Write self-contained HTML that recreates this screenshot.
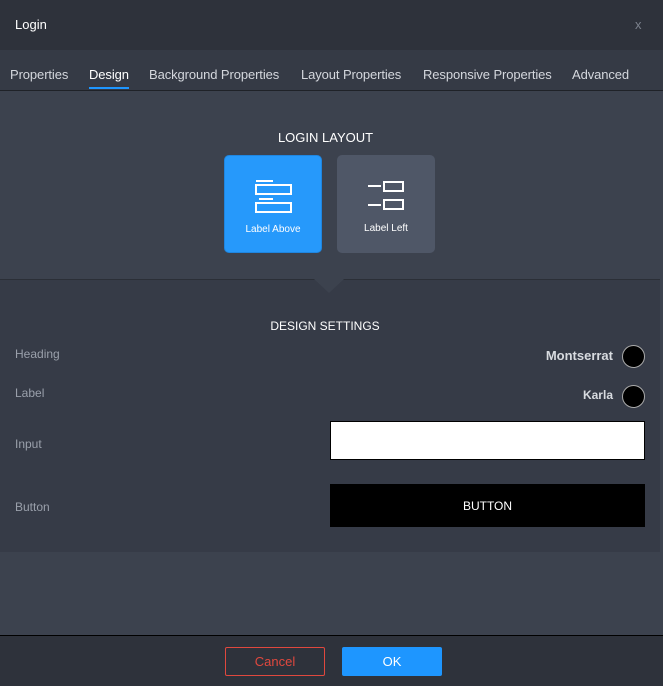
<!DOCTYPE html>
<html><head><style>
*{margin:0;padding:0;box-sizing:border-box}
body{width:663px;height:686px;background:#3c424e;font-family:"Liberation Sans",sans-serif;position:relative;overflow:hidden;color:#fff}
.abs{position:absolute}
.hdr{left:0;top:0;width:663px;height:50px;background:#2e323b}
.tabs{left:0;top:50px;width:663px;height:41px;background:#353a45;border-bottom:1px solid #1f2228}
.tab{position:absolute;top:17px;font-size:13px;color:#d4d7dd;letter-spacing:-0.1px}
.card{position:absolute;top:155px;width:98px;height:98px;border-radius:5px;font-size:10px;text-align:center}
.card span{position:absolute;left:0;right:0;top:68px}
.lbl{position:absolute;left:15px;font-size:12px;color:#9aa0ab}
</style></head><body>
<div class="abs hdr"></div>
<div class="abs" style="left:15px;top:17px;font-size:13px">Login</div>
<div class="abs" style="left:635px;top:17px;font-size:13px;color:#7b818c">x</div>
<div class="abs tabs">
<div class="tab" style="left:10px">Properties</div>
<div class="tab" style="left:89px;color:#fff">Design</div>
<div class="abs" style="left:89px;top:37px;width:40px;height:2px;background:#1e96ff"></div>
<div class="tab" style="left:149px">Background Properties</div>
<div class="tab" style="left:301px">Layout Properties</div>
<div class="tab" style="left:423px">Responsive Properties</div>
<div class="tab" style="left:572px">Advanced</div>
</div>
<div class="abs" style="left:0;top:130px;width:651px;text-align:center;font-size:13px">LOGIN LAYOUT</div>
<div class="card" style="left:224px;background:#2699fb;border:1px solid #1f86e0">
<svg class="abs" style="left:0;top:0" width="98" height="98"><g fill="none" stroke="#fff" stroke-width="2"><path d="M31 25h17M34 43h14"/><rect x="31" y="29" width="35" height="9"/><rect x="31" y="47" width="35" height="9"/></g></svg>
<span>Label Above</span></div>
<div class="card" style="left:337px;background:#4f5767">
<svg class="abs" style="left:0;top:0" width="98" height="98"><g fill="none" stroke="#fff" stroke-width="2"><path d="M31 31h13M31 50h13"/><rect x="47" y="27" width="19" height="9"/><rect x="47" y="45" width="19" height="9"/></g></svg>
<span>Label Left</span></div>
<div class="abs" style="left:0;top:279px;width:660px;height:273px;background:#363b47;border-top:1px solid #2b2f37"></div>
<svg class="abs" style="left:314px;top:279px" width="32" height="16"><path d="M0 0L15 14L30 0Z" fill="#3c424e"/></svg>
<div class="abs" style="left:0;top:319px;width:650px;text-align:center;font-size:12px">DESIGN SETTINGS</div>
<div class="lbl" style="top:347px">Heading</div>
<div class="lbl" style="top:386px">Label</div>
<div class="lbl" style="top:437px">Input</div>
<div class="lbl" style="top:500px">Button</div>
<div class="abs" style="right:50px;top:348px;font-size:13px;font-weight:bold;color:#d8dbe0">Montserrat</div>
<div class="abs" style="left:622px;top:345px;width:23px;height:23px;border-radius:50%;background:#000;border:1px solid #aaa"></div>
<div class="abs" style="right:50px;top:388px;font-size:12px;font-weight:bold;color:#d8dbe0">Karla</div>
<div class="abs" style="left:622px;top:385px;width:23px;height:23px;border-radius:50%;background:#000;border:1px solid #aaa"></div>
<div class="abs" style="left:330px;top:421px;width:315px;height:39px;background:#fff;border:1px solid #000"></div>
<div class="abs" style="left:330px;top:484px;width:315px;height:43px;background:#000;font-size:12px;text-align:center;line-height:45px">BUTTON</div>
<div class="abs" style="left:0;top:635px;width:663px;height:51px;background:#2e323b;border-top:1px solid #000"></div>
<div class="abs" style="left:225px;top:647px;width:100px;height:29px;border:1px solid #e0483e;border-radius:2px;color:#e0483e;font-size:13px;text-align:center;line-height:27px">Cancel</div>
<div class="abs" style="left:342px;top:647px;width:100px;height:29px;background:#1e96ff;border-radius:2px;font-size:13px;text-align:center;line-height:29px">OK</div>
</body></html>
